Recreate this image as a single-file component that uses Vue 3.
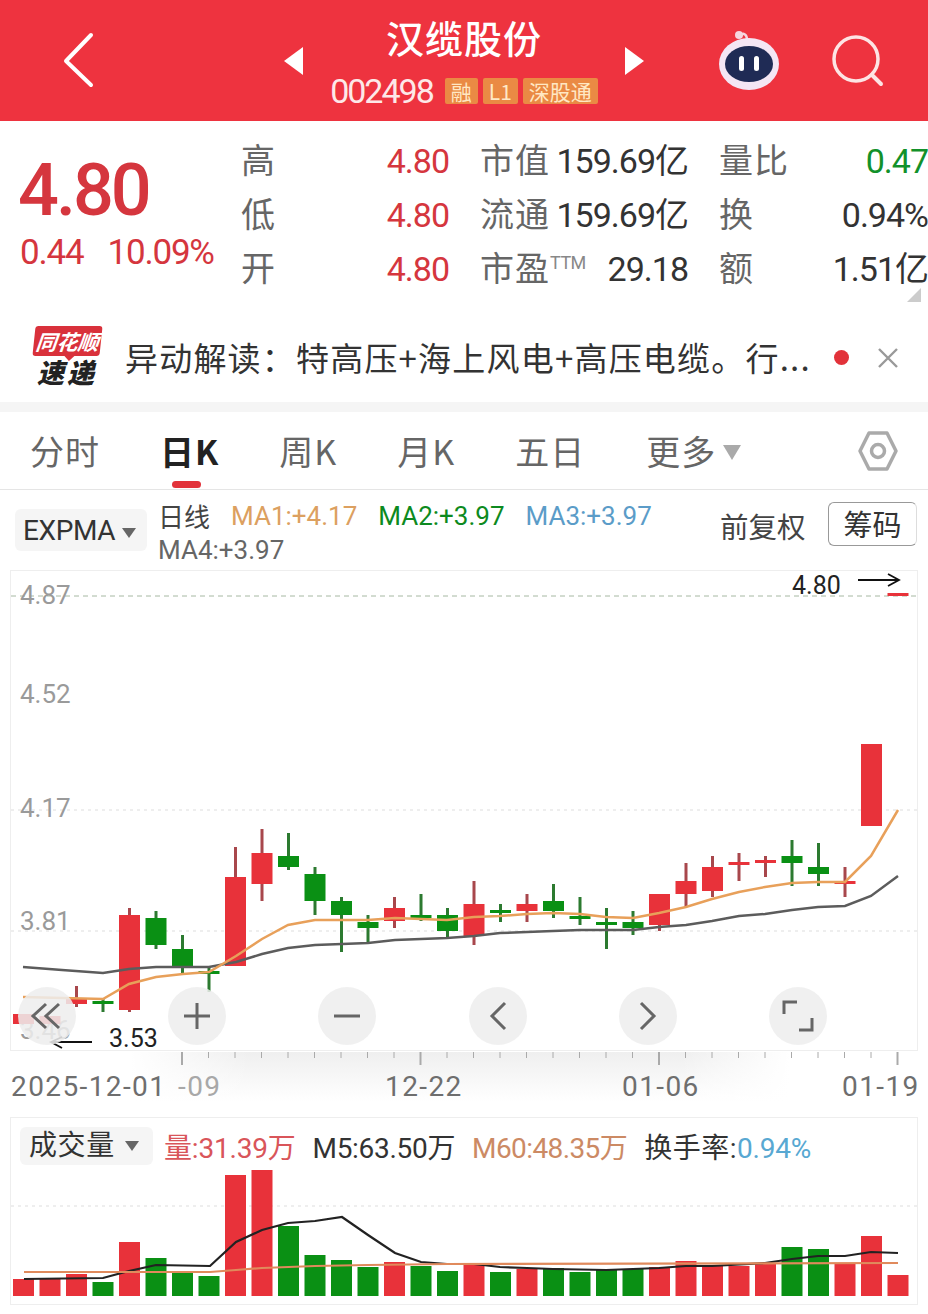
<template>
  <div class="page">
    <!-- 顶部 -->
    <header class="top">
      <div class="top-left">
        <svg class="back" width="32" height="56" viewBox="0 0 32 56">
          <path d="M29 3 L4 29 L29 53" fill="none" stroke="#fff" stroke-width="4" stroke-linecap="round" stroke-linejoin="round" />
        </svg>
      </div>
      <div class="top-mid">
        <span class="tri tri-l"></span>
        <div class="stock">
          <div class="stock-name">汉缆股份</div>
          <div class="stock-sub">
            <span class="stock-code">002498</span>
            <span class="tag">融</span>
            <span class="tag">L1</span>
            <span class="tag">深股通</span>
          </div>
        </div>
        <span class="tri tri-r"></span>
      </div>
      <div class="top-right">
        <svg width="66" height="66" viewBox="0 0 66 66">
          <path d="M24 8 C27 4 31 6 31 12" fill="none" stroke="#f6d5de" stroke-width="2.5" />
          <circle cx="23" cy="7" r="4" fill="#f6d5de" />
          <ellipse cx="33" cy="36" rx="30" ry="26" fill="#f4e6f4" />
          <ellipse cx="33" cy="36" rx="24" ry="18" fill="#1f2b55" />
          <rect x="23" y="28" width="5" height="15" rx="2.5" fill="#fff" />
          <rect x="38" y="28" width="5" height="15" rx="2.5" fill="#fff" />
        </svg>
        <svg width="54" height="54" viewBox="0 0 54 54">
          <circle cx="25" cy="25" r="22" fill="none" stroke="#fde4e4" stroke-width="3.5" />
          <path d="M41 41 L50 50" stroke="#fde4e4" stroke-width="4" stroke-linecap="round" />
        </svg>
      </div>
    </header>

    <!-- 报价 -->
    <section class="quote">
      <div class="quote-main">
        <div class="price">4.80</div>
        <div class="change"><span>0.44</span><span>10.09%</span></div>
      </div>
      <div class="quote-grid">
        <div v-for="c in quoteCells" :key="c.label" class="cell">
          <span class="cell-label">{{ c.label }}<sup v-if="c.ttm">TTM</sup></span>
          <span class="cell-val" :class="c.cls">{{ c.value }}</span>
        </div>
      </div>
      <span class="corner"></span>
    </section>

    <!-- 异动解读 -->
    <section class="news">
      <div class="logo">
        <span class="logo-tag"><i>同花顺</i></span>
        <span class="logo-sub">速递</span>
      </div>
      <div class="news-text">异动解读：特高压+海上风电+高压电缆。行...</div>
      <span class="dot"></span>
      <svg class="close" width="22" height="22" viewBox="0 0 22 22">
        <path d="M2 2 L20 20 M20 2 L2 20" stroke="#999" stroke-width="2.4" />
      </svg>
    </section>

    <!-- 周期 -->
    <nav class="tabs">
      <span v-for="t in tabs" :key="t" class="tab" :class="{ active: t === '日K' }">{{ t }}</span>
      <span class="tab more">更多<b class="down"></b></span>
      <svg class="hex" width="42" height="44" viewBox="0 0 42 44">
        <path d="M12 4 H30 L39 22 L30 40 H12 L3 22 Z" fill="none" stroke="#aaa" stroke-width="3.5" stroke-linejoin="round" />
        <circle cx="21" cy="22" r="6.5" fill="none" stroke="#aaa" stroke-width="3.5" />
      </svg>
    </nav>

    <!-- 指标 -->
    <section class="ma-row">
      <div class="chip">EXPMA<b class="down small"></b></div>
      <div class="ma-list">
        <div class="ma-line">
          <span class="ma-day">日线</span>
          <span class="ma1">MA1:+4.17</span>
          <span class="ma2">MA2:+3.97</span>
          <span class="ma3">MA3:+3.97</span>
        </div>
        <div class="ma4">MA4:+3.97</div>
      </div>
      <span class="fq">前复权</span>
      <span class="chouma">筹码</span>
    </section>

    <!-- K线 -->
    <section class="kline">
      <svg class="kline-svg" width="906" height="479" viewBox="11 572 906 479">
        <path d="M11 597 H917" stroke="#a6b8a2" stroke-width="1" stroke-dasharray="5 4" />
        <path d="M11 811 H917 M11 932 H917" stroke="#ddd" stroke-width="1" stroke-dasharray="3 4" />
        <text class="axis-y" x="20" y="605">4.87</text>
        <text class="axis-y" x="20" y="704">4.52</text>
        <text class="axis-y" x="20" y="818">4.17</text>
        <text class="axis-y" x="20" y="931">3.81</text>
        <text class="axis-y" x="20" y="1040">3.46</text>
        <g v-for="k in candles" :key="k.i">
          <rect :x="k.cx - 1.5" :y="k.wt" width="3" :height="k.wb - k.wt" :fill="k.wick" />
          <rect :x="k.cx - 10.5" :y="k.top" width="21" :height="k.h" :fill="k.color" />
        </g>
        <polyline :points="maGrey" fill="none" stroke="#5c5c5c" stroke-width="2.5" />
        <polyline :points="maOrange" fill="none" stroke="#e8a05a" stroke-width="2.5" />
        <text class="mark" x="792" y="595">4.80</text>
        <path d="M858 581 H899 M888 575 L899 581 L888 587" fill="none" stroke="#111" stroke-width="1.8" />
        <path d="M92 1043 H51 M62 1038 L51 1043 L62 1049" fill="none" stroke="#111" stroke-width="1.8" />
      </svg>
      <div class="ctrl">
        <span class="ctrl-btn">
          <svg width="34" height="34" viewBox="0 0 34 34"><path d="M16 5 L3 17 L16 29 M29 5 L16 17 L29 29" fill="none" stroke="#666" stroke-width="3" /></svg>
        </span>
        <span class="ctrl-btn">
          <svg width="30" height="30" viewBox="0 0 30 30"><path d="M2 15 H28 M15 2 V28" stroke="#666" stroke-width="3" /></svg>
        </span>
        <span class="ctrl-btn">
          <svg width="30" height="30" viewBox="0 0 30 30"><path d="M2 15 H28" stroke="#666" stroke-width="3" /></svg>
        </span>
        <span class="ctrl-btn">
          <svg width="18" height="30" viewBox="0 0 18 30"><path d="M16 2 L3 15 L16 28" fill="none" stroke="#666" stroke-width="3" /></svg>
        </span>
        <span class="ctrl-btn">
          <svg width="18" height="30" viewBox="0 0 18 30"><path d="M2 2 L15 15 L2 28" fill="none" stroke="#666" stroke-width="3" /></svg>
        </span>
        <span class="ctrl-btn">
          <svg width="32" height="32" viewBox="0 0 32 32"><path d="M15 2 H2 V14 M17 30 H30 V18" fill="none" stroke="#666" stroke-width="3" /></svg>
        </span>
      </div>
      <span class="low-mark">3.53</span>
    </section>

    <!-- 时间轴 -->
    <svg class="axis-x" width="928" height="66" viewBox="0 1052 928 66">
      <defs>
        <linearGradient id="axisFade" x1="0" y1="0" x2="0" y2="1">
          <stop offset="0" stop-color="#efefef" />
          <stop offset="1" stop-color="#fff" />
        </linearGradient>
        <linearGradient id="fadeL" x1="0" y1="0" x2="1" y2="0">
          <stop offset="0" stop-color="#fff" />
          <stop offset="1" stop-color="#fff" stop-opacity="0" />
        </linearGradient>
        <linearGradient id="fadeR" x1="0" y1="0" x2="1" y2="0">
          <stop offset="0" stop-color="#fff" stop-opacity="0" />
          <stop offset="1" stop-color="#fff" />
        </linearGradient>
      </defs>
      <rect x="130" y="1053" width="660" height="50" fill="url(#axisFade)" />
      <rect x="130" y="1053" width="120" height="50" fill="url(#fadeL)" />
      <rect x="680" y="1053" width="110" height="50" fill="url(#fadeR)" />
      <path v-for="t in ticks" :key="t.x" :d="`M${t.x} 1053 V${t.end}`" stroke="#aaa" :stroke-width="t.w" />
      <text class="date" x="11" y="1097">2025-12-01</text>
      <text class="date light" x="178" y="1097">-09</text>
      <text class="date" x="385" y="1097">12-22</text>
      <text class="date" x="622" y="1097">01-06</text>
      <text class="date" x="842" y="1097">01-19</text>
    </svg>

    <!-- 成交量 -->
    <section class="vol">
      <div class="vol-head">
        <div class="vol-chip">成交量<b class="down small"></b></div>
        <span class="v-red">量:31.39万</span>
        <span class="v-dark">M5:63.50万</span>
        <span class="v-orange">M60:48.35万</span>
        <span class="v-turn">换手率:<em>0.94%</em></span>
      </div>
      <svg class="vol-svg" width="906" height="136" viewBox="11 1170 906 136">
        <path d="M11 1207 H917" stroke="#ddd" stroke-width="1" stroke-dasharray="3 4" />
        <rect v-for="b in volBars" :key="b.i" :x="b.x" :y="b.y" width="21" :height="b.h" :fill="b.color" />
        <polyline :points="volBlack" fill="none" stroke="#222" stroke-width="2.2" />
        <polyline :points="volOrange" fill="none" stroke="#e08a5c" stroke-width="2.2" />
      </svg>
    </section>
  </div>
</template>

<script setup>
const RED = '#e8323a'
const GREEN = '#0a9014'

const quoteCells = [
  { label: '高', value: '4.80', cls: 'red' },
  { label: '市值', value: '159.69亿' },
  { label: '量比', value: '0.47', cls: 'green' },
  { label: '低', value: '4.80', cls: 'red' },
  { label: '流通', value: '159.69亿' },
  { label: '换', value: '0.94%' },
  { label: '开', value: '4.80', cls: 'red' },
  { label: '市盈', value: '29.18', ttm: true },
  { label: '额', value: '1.51亿' }
]

const tabs = ['分时', '日K', '周K', '月K', '五日']

function cx(i) {
  return 23.5 + 26.5 * i
}

// [序号, 涨跌, 实体上沿, 实体下沿, 影线上, 影线下]
const rawCandles = [
  [0, 1, 1015, 1025, 1015, 1025],
  [1, 1, 1017, 1025, 1017, 1025],
  [2, 1, 1000, 1005, 987, 1008],
  [3, 0, 1002, 1005, 1000, 1013],
  [4, 1, 916, 1011, 909, 1013],
  [5, 0, 919, 946, 912, 950],
  [6, 0, 950, 967, 936, 975],
  [7, 0, 972, 975, 968, 993],
  [8, 1, 878, 967, 848, 967],
  [9, 1, 854, 885, 830, 902],
  [10, 0, 857, 868, 834, 871],
  [11, 0, 875, 902, 868, 916],
  [12, 0, 902, 916, 898, 953],
  [13, 0, 923, 929, 916, 943],
  [14, 1, 909, 922, 898, 929],
  [15, 0, 916, 919, 895, 922],
  [16, 0, 916, 932, 909, 939],
  [17, 1, 905, 937, 882, 946],
  [18, 0, 911, 914, 905, 923],
  [19, 1, 905, 912, 895, 923],
  [20, 0, 902, 912, 885, 919],
  [21, 0, 917, 920, 898, 926],
  [22, 0, 923, 926, 909, 950],
  [23, 0, 923, 929, 912, 936],
  [24, 1, 895, 926, 895, 932],
  [25, 1, 882, 895, 864, 908],
  [26, 1, 868, 892, 857, 898],
  [27, 1, 863, 866, 854, 882],
  [28, 1, 861, 864, 857, 878],
  [29, 0, 857, 864, 841, 887],
  [30, 0, 868, 875, 844, 887],
  [31, 1, 882, 885, 868, 898],
  [32, 1, 745, 827, 745, 827],
  [33, 1, 594, 597, 594, 597]
]

const candles = rawCandles.map(([i, up, top, bottom, wt, wb]) => ({
  i,
  cx: cx(i),
  top,
  h: bottom - top,
  wt,
  wb,
  color: up ? RED : GREEN,
  wick: up ? '#a8474c' : '#2c7a30'
}))

const maOrange = '23,998 103,1000 129,985 156,978 183,975 209,973 236,957 262,940 288,926 315,921 342,921 368,921 395,919 421,920 447,921 474,918 500,917 527,915 553,914 580,915 606,918 633,919 659,914 686,908 712,900 739,893 765,888 792,884 818,883 845,883 871,857 898,811'
const maGrey = '23,968 62,971 103,974 129,970 156,968 183,968 209,968 236,963 262,955 288,949 315,946 342,945 368,944 395,941 421,940 447,939 474,937 500,934 527,933 553,932 580,931 606,931 633,931 659,928 686,926 712,922 739,917 765,915 792,911 818,908 845,907 871,897 898,877'

const ticks = []
for (let i = 6; i <= 33; i++) {
  const major = i === 6 || i === 15 || i === 24 || i === 33
  ticks.push({ x: cx(i) - 0.5, end: major ? 1066 : 1059, w: major ? 2 : 1 })
}

// [顶部 y, 涨跌]
const rawVol = [
  [1280, 1], [1280, 1], [1275, 1], [1283, 0], [1243, 1], [1259, 0], [1274, 0], [1277, 0],
  [1176, 1], [1171, 1], [1227, 0], [1256, 0], [1261, 0], [1268, 0], [1263, 1], [1267, 0],
  [1272, 0], [1264, 1], [1273, 0], [1270, 1], [1269, 0], [1273, 0], [1271, 0], [1270, 0],
  [1268, 1], [1262, 1], [1267, 1], [1267, 1], [1265, 1], [1248, 0], [1250, 0], [1265, 1],
  [1237, 1], [1276, 1]
]

const volBars = rawVol.map(([y, up], i) => ({
  i,
  x: cx(i) - 10.5,
  y,
  h: 1297 - y,
  color: up ? RED : GREEN
}))

const volBlack = '24,1280 103,1279 129,1272 156,1266 210,1267 236,1243 262,1231 288,1224 315,1222 342,1218 368,1236 395,1254 421,1263 447,1265 474,1265 500,1268 527,1269 553,1270 606,1271 633,1270 659,1269 686,1267 712,1267 765,1264 792,1260 818,1257 845,1257 871,1253 898,1254'
const volOrange = '24,1273 210,1273 236,1271 262,1269 315,1267 368,1266 447,1265 898,1264'
</script>

<style>
html,
body {
  margin: 0;
  background: #fff;
}
</style>

<style scoped>
.page {
  width: 928px;
  height: 1314px;
  overflow: hidden;
  background: #fff;
  font-family: Roboto, "Noto Sans CJK SC", sans-serif;
  color: #333;
}

.top {
  height: 121px;
  background: #ee333f;
  display: grid;
  grid-template-columns: 284px 360px 284px;
  align-items: center;
  color: #fff;
}
.top-left {
  padding-left: 62px;
  display: flex;
}
.back {
  margin-top: -2px;
}
.top-mid {
  display: flex;
  align-items: center;
  justify-content: space-between;
}
.tri {
  width: 0;
  height: 0;
  border-top: 14px solid transparent;
  border-bottom: 14px solid transparent;
  margin-top: 1px;
}
.tri-l {
  border-right: 19px solid #fff;
}
.tri-r {
  border-left: 19px solid #fff;
}
.stock {
  text-align: center;
  padding-top: 1px;
}
.stock-name {
  font-size: 38px;
  line-height: 48px;
  font-weight: 500;
  font-family: "Noto Sans CJK SC", sans-serif;
  letter-spacing: 1px;
}
.stock-sub {
  display: flex;
  align-items: center;
  gap: 5px;
  margin-top: 12px;
}
.stock-code {
  font-size: 34px;
  line-height: 36px;
  margin-right: 7px;
  letter-spacing: -2px;
  color: #fde8e8;
}
.tag {
  background: #ea8a44;
  color: #ffe8c4;
  font-size: 21px;
  line-height: 26px;
  height: 26px;
  padding: 0 6px;
  border-radius: 2px;
  font-family: "Noto Sans CJK SC", sans-serif;
}
.top-right {
  display: flex;
  align-items: center;
  padding-left: 72px;
  gap: 49px;
}

.quote {
  position: relative;
  height: 199px;
  display: flex;
}
.quote-main {
  width: 241px;
  padding-left: 20px;
  box-sizing: border-box;
  color: #d5363e;
}
.price {
  font-size: 72px;
  line-height: 70px;
  font-weight: 500;
  margin: 35px 0 0 -2px;
  letter-spacing: -3px;
}
.change {
  display: flex;
  gap: 24px;
  font-size: 35px;
  line-height: 40px;
  margin-top: 7px;
  letter-spacing: -1.2px;
  white-space: nowrap;
}
.quote-grid {
  width: 687px;
  display: grid;
  grid-template-columns: 208px 208px 209px;
  grid-auto-rows: 54px;
  column-gap: 31px;
  margin-top: 13px;
}
.cell {
  display: flex;
  justify-content: space-between;
  align-items: center;
}
.cell-label {
  font-family: "Noto Sans CJK SC", sans-serif;
  font-size: 34px;
  line-height: 48px;
  margin-top: -4px;
  color: #666;
  white-space: nowrap;
  letter-spacing: 1px;
}
.cell-label sup {
  font-size: 18px;
  line-height: 0;
  vertical-align: 12px;
  color: #888;
  font-family: Roboto, sans-serif;
  letter-spacing: -0.5px;
}
.cell-val {
  font-size: 34px;
  line-height: 40px;
  color: #333;
  white-space: nowrap;
  letter-spacing: -1px;
}
.cell-val.red {
  color: #d5363e;
}
.cell-val.green {
  color: #12912a;
}
.corner {
  position: absolute;
  right: 7px;
  top: 167px;
  width: 0;
  height: 0;
  border-bottom: 14px solid #ccc;
  border-left: 14px solid transparent;
}

.news {
  height: 82px;
  display: flex;
  align-items: center;
  border-bottom: 10px solid #f5f5f5;
}
.logo {
  width: 74px;
  margin-left: 30px;
  display: flex;
  flex-direction: column;
  align-items: center;
  margin-top: -8px;
}
.logo-tag {
  position: relative;
  background: #d9313b;
  color: #fff;
  font-size: 21px;
  line-height: 30px;
  font-weight: 700;
  padding: 0 2px;
  border-radius: 3px;
  transform: skewX(-6deg);
  white-space: nowrap;
  font-family: "Noto Sans CJK SC", sans-serif;
}
.logo-tag::after {
  content: "";
  position: absolute;
  left: 32px;
  bottom: -5px;
  border-left: 5px solid transparent;
  border-right: 5px solid transparent;
  border-top: 5px solid #d9313b;
}
.logo-sub {
  font-size: 27px;
  line-height: 32px;
  font-weight: 900;
  font-style: italic;
  letter-spacing: 3px;
  color: #222;
  font-family: "Noto Sans CJK SC", sans-serif;
}
.news-text {
  margin-left: 21px;
  margin-top: -9px;
  width: 690px;
  font-size: 33px;
  white-space: nowrap;
  color: #333;
  letter-spacing: 1.2px;
  font-family: "Noto Sans CJK SC", sans-serif;
}
.dot {
  width: 15px;
  height: 15px;
  border-radius: 50%;
  background: #e2323a;
  margin: -8px 0 0 19px;
}
.close {
  margin: -6px 0 0 28px;
}

.tabs {
  position: relative;
  height: 78px;
  box-sizing: border-box;
  border-bottom: 1px solid #e5e5e5;
  display: flex;
  align-items: center;
  gap: 60px;
  padding-left: 30px;
}
.tab {
  font-size: 34px;
  color: #666;
  letter-spacing: 1px;
  font-family: "Noto Sans CJK SC", sans-serif;
  white-space: nowrap;
}
.tab.active {
  color: #222;
  font-weight: 700;
  position: relative;
}
.tab.active::after {
  content: "";
  position: absolute;
  left: 12px;
  bottom: -13px;
  width: 29px;
  height: 7px;
  border-radius: 4px;
  background: #e2323a;
}
.more {
  margin-left: 1px;
}
.down {
  display: inline-block;
  width: 0;
  height: 0;
  margin-left: 7px;
  vertical-align: 5px;
  border-left: 9px solid transparent;
  border-right: 9px solid transparent;
  border-top: 15px solid #aaa;
}
.down.small {
  border-left-width: 7px;
  border-right-width: 7px;
  border-top-width: 10px;
  border-top-color: #666;
  vertical-align: middle;
}
.hex {
  position: absolute;
  right: 29px;
  top: 17px;
}

.ma-row {
  height: 80px;
  display: flex;
  position: relative;
  align-items: flex-start;
}
.chip {
  margin: 19px 0 0 15px;
  width: 132px;
  height: 42px;
  box-sizing: border-box;
  padding-left: 8px;
  line-height: 44px;
  background: #f5f5f5;
  border-radius: 6px;
  font-size: 28px;
  letter-spacing: -0.4px;
  color: #333;
  white-space: nowrap;
}
.ma-list {
  margin-left: 11px;
  padding-top: 9px;
  font-size: 26px;
  line-height: 34px;
}
.ma-line {
  display: flex;
  gap: 21px;
  white-space: nowrap;
}
.ma-day {
  color: #444;
  font-family: "Noto Sans CJK SC", sans-serif;
}
.ma1 {
  color: #dca060;
}
.ma2 {
  color: #0d8a20;
}
.ma3 {
  color: #5b9cc8;
}
.ma4 {
  color: #666;
}
.fq {
  position: absolute;
  left: 720px;
  top: 15px;
  font-size: 28.5px;
  line-height: 42px;
  color: #444;
  font-family: "Noto Sans CJK SC", sans-serif;
}
.chouma {
  position: absolute;
  left: 828px;
  top: 12px;
  width: 89px;
  height: 44px;
  box-sizing: border-box;
  border: 1px solid #999;
  border-right-color: #ddd;
  border-radius: 6px;
  text-align: center;
  font-size: 29px;
  line-height: 41px;
  color: #333;
  font-family: "Noto Sans CJK SC", sans-serif;
}

.kline {
  position: relative;
  margin-left: 10px;
  width: 908px;
  height: 481px;
  box-sizing: border-box;
  border: 1px solid #eee;
}
.kline-svg {
  display: block;
}
.axis-y {
  font-size: 26px;
  fill: #9a9a9a;
  font-family: Roboto, sans-serif;
}
.mark {
  font-size: 25px;
  fill: #222;
  font-family: Roboto, sans-serif;
}
.low-mark {
  position: absolute;
  left: 98px;
  top: 457px;
  font-size: 25px;
  line-height: 22px;
  color: #222;
}
.ctrl {
  position: absolute;
  left: 7px;
  top: 416px;
  width: 809px;
  display: flex;
  justify-content: space-between;
}
.ctrl-btn {
  width: 58px;
  height: 58px;
  border-radius: 50%;
  background: rgba(238, 238, 238, 0.86);
  display: flex;
  align-items: center;
  justify-content: center;
}

.axis-x {
  display: block;
}
.date {
  font-size: 28px;
  fill: #6e6e6e;
  letter-spacing: 1.4px;
  font-family: Roboto, sans-serif;
}
.date.light {
  fill: #a8a8a8;
}

.vol {
  margin-left: 10px;
  width: 908px;
  height: 188px;
  box-sizing: border-box;
  border: 1px solid #eee;
}
.vol-head {
  height: 51px;
  display: flex;
  align-items: center;
  gap: 17px;
  padding-left: 9px;
  font-size: 28px;
  white-space: nowrap;
  box-sizing: border-box;
  padding-top: 5px;
}
.vol-chip {
  width: 133px;
  height: 38px;
  display: flex;
  align-items: center;
  box-sizing: border-box;
  padding-left: 9px;
  margin-right: -6px;
  background: #f5f5f5;
  border-radius: 6px;
  color: #333;
  line-height: 38px;
  letter-spacing: 0.6px;
}
.vol-chip .down {
  margin-left: 10px;
}
.v-red {
  color: #d9555a;
  letter-spacing: -0.2px;
}
.v-dark {
  color: #333;
  letter-spacing: -0.3px;
}
.v-orange {
  color: #cc8a64;
  letter-spacing: -0.6px;
}
.v-turn {
  color: #333;
  letter-spacing: 0.5px;
}
.v-turn em {
  font-style: normal;
  color: #58a8d2;
  letter-spacing: -0.2px;
}
.vol-svg {
  display: block;
}
</style>
